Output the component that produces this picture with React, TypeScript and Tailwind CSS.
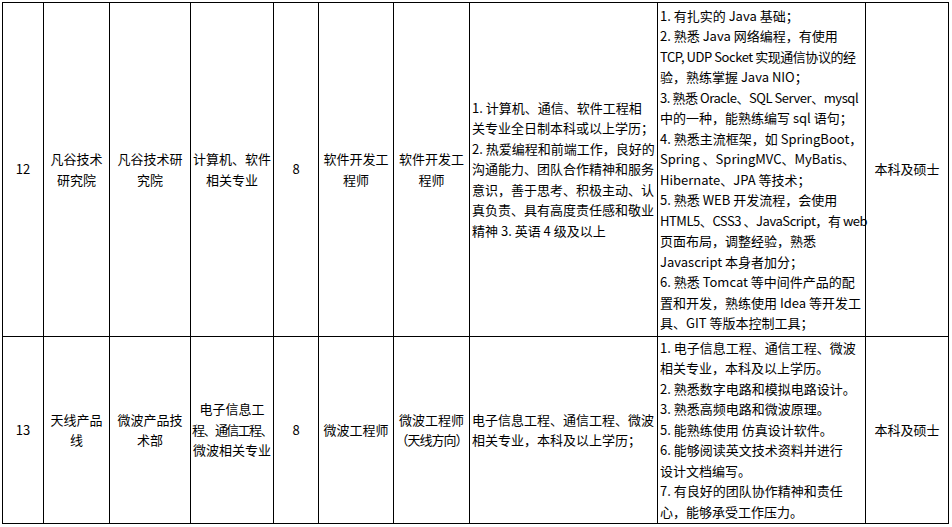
const cols = [41, 66, 81, 83, 45, 75, 76, 188, 208, 83];

// lines marked "~" are squeezed a little so they stay inside the cell
const skillsA = [
  "1. 有扎实的 Java 基础；",
  "2. 熟悉 Java 网络编程，有使用",
  "~TCP, UDP Socket 实现通信协议的经",
  "验，熟练掌握 Java NIO；",
  "~3. 熟悉 Oracle、SQL Server、mysql",
  "中的一种，能熟练编写 sql 语句；",
  "4. 熟悉主流框架，如 SpringBoot，",
  "Spring 、SpringMVC、MyBatis、",
  "Hibernate、JPA 等技术；",
  "5. 熟悉 WEB 开发流程，会使用",
  "~HTML5、CSS3 、JavaScript，有 web",
  "页面布局，调整经验，熟悉",
  "Javascript 本身者加分；",
  "6. 熟悉 Tomcat 等中间件产品的配",
  "置和开发，熟练使用 Idea 等开发工",
  "具、GIT 等版本控制工具；",
];

const reqA = [
  "1. 计算机、通信、软件工程相",
  "关专业全日制本科或以上学历；",
  "2. 热爱编程和前端工作，良好的",
  "沟通能力、团队合作精神和服务",
  "意识，善于思考、积极主动、认",
  "真负责、具有高度责任感和敬业",
  "精神 3. 英语 4 级及以上",
];

const skillsB = [
  "1. 电子信息工程、通信工程、微波",
  "相关专业，本科及以上学历。",
  "2. 熟悉数字电路和模拟电路设计。",
  "3. 熟悉高频电路和微波原理。",
  "5. 能熟练使用 仿真设计软件。",
  "6. 能够阅读英文技术资料并进行",
  "设计文档编写。",
  "7. 有良好的团队协作精神和责任",
  "心，能够承受工作压力。",
];

const reqB = ["电子信息工程、通信工程、微波", "相关专业，本科及以上学历；"];

function Lines({ lines }: { lines: string[] }) {
  return (
    <>
      {lines.map((l, i) =>
        l.startsWith("~") ? (
          <div key={i} className="whitespace-nowrap tracking-[-0.45px]">
            {l.slice(1)}
          </div>
        ) : (
          <div key={i} className="whitespace-nowrap">
            {l}
          </div>
        ),
      )}
    </>
  );
}

const td = "border border-black align-middle text-center px-px";
const tdLeft = "border border-black align-middle text-left pl-[2px] pr-0";

export default function App() {
  return (
    <div className="min-h-[527px] bg-white pl-[2px] pt-[2px] font-['Noto_Sans_CJK_SC',sans-serif] text-[13px] leading-[20.5px] text-black">
      <table className="w-[947px] table-fixed border-collapse">
        <colgroup>
          {cols.map((w, i) => (
            <col key={i} style={{ width: w }} />
          ))}
        </colgroup>
        <tbody>
          <tr className="h-[334px]">
            <td className={td}>12</td>
            <td className={td}>
              <Lines lines={["凡谷技术", "研究院"]} />
            </td>
            <td className={td}>
              <Lines lines={["凡谷技术研", "究院"]} />
            </td>
            <td className={td}>
              <Lines lines={["计算机、软件", "相关专业"]} />
            </td>
            <td className={td}>8</td>
            <td className={td}>
              <Lines lines={["软件开发工", "程师"]} />
            </td>
            <td className={td}>
              <Lines lines={["软件开发工", "程师"]} />
            </td>
            <td className={tdLeft}>
              <Lines lines={reqA} />
            </td>
            <td className={tdLeft}>
              <Lines lines={skillsA} />
            </td>
            <td className={td}>本科及硕士</td>
          </tr>
          <tr className="h-[187px]">
            <td className={td}>13</td>
            <td className={td}>
              <Lines lines={["天线产品", "线"]} />
            </td>
            <td className={td}>
              <Lines lines={["微波产品技", "术部"]} />
            </td>
            <td className={td}>
              <div className="whitespace-nowrap">电子信息工</div>
              <div className="whitespace-nowrap tracking-[-1.6px]">程、通信工程、</div>
              <div className="whitespace-nowrap">微波相关专业</div>
            </td>
            <td className={td}>8</td>
            <td className={td}>微波工程师</td>
            <td className={td}>
              <div className="whitespace-nowrap">微波工程师</div>
              <div className="whitespace-nowrap tracking-[-1px]">（天线方向）</div>
            </td>
            <td className={tdLeft}>
              <Lines lines={reqB} />
            </td>
            <td className={tdLeft}>
              <Lines lines={skillsB} />
            </td>
            <td className={td}>本科及硕士</td>
          </tr>
        </tbody>
      </table>
    </div>
  );
}
